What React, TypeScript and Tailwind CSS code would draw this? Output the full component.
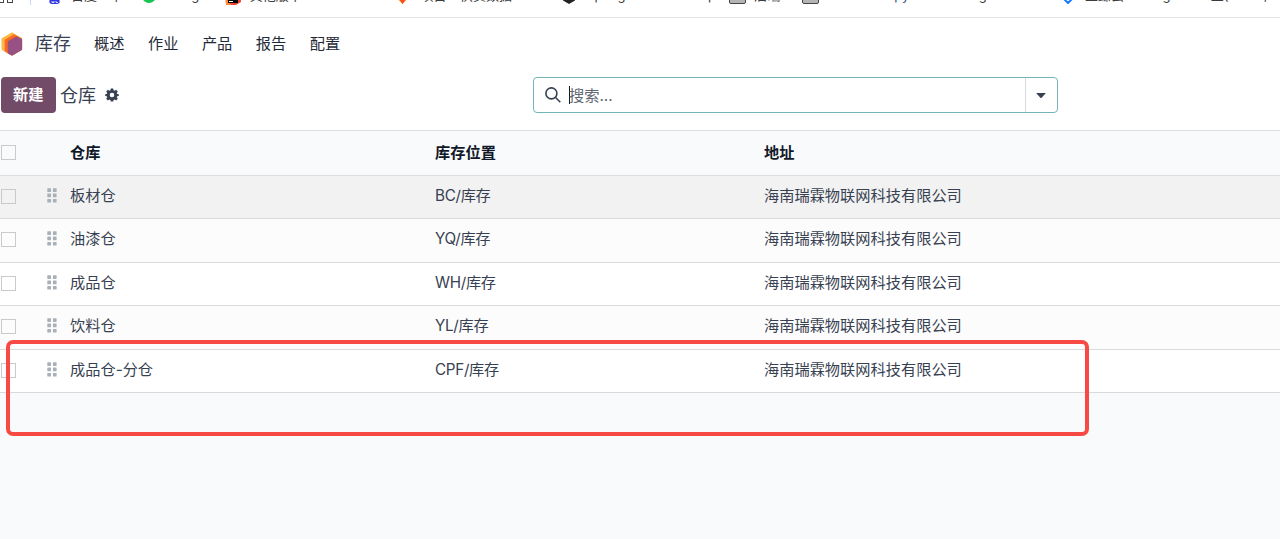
import React from "react";

const menus = ["概述", "作业", "产品", "报告", "配置"];

const warehouses = [
  { name: "板材仓", location: "BC/库存", bg: "bg-[#f2f2f2]" },
  { name: "油漆仓", location: "YQ/库存", bg: "bg-[#fcfcfc]" },
  { name: "成品仓", location: "WH/库存", bg: "bg-white" },
  { name: "饮料仓", location: "YL/库存", bg: "bg-[#fcfcfc]" },
  { name: "成品仓-分仓", location: "CPF/库存", bg: "bg-white" },
];

const company = "海南瑞霖物联网科技有限公司";

function Folder() {
  return (
    <span className="mt-[2px] h-[13px] w-[17px] shrink-0 rounded-[2px] border-[1.5px] border-[#454545] bg-[#b5b5b5]" />
  );
}

// Only the lower edge of the bookmarks is inside the window
function Bookmarks() {
  return (
    <div className="h-[18px] overflow-hidden border-b border-[#e4e5e6] bg-white text-[13px] text-[#3c3c3c]">
      <div className="-mt-[14px] flex h-5 items-center whitespace-nowrap">
        <div className="flex w-[48px] gap-[3px]">
          <span className="mt-[9px] h-[7px] w-[4px] border-[1.5px] border-l-0 border-[#474747]" />
          <span className="mt-[9px] h-[7px] w-[6px] border-[1.5px] border-[#474747]" />
          <span className="ml-[14px] h-[18px] w-px bg-[#c6dafb]" />
        </div>
        <div className="flex w-[94px] items-center gap-[10px]">
          <svg className="h-4 w-[13px]" viewBox="0 0 12 16">
            <path d="M1 11 4 8H8L11 11V15L9 16H3L1 15Z" fill="#3037df" />
            <path d="M3.5 13v1.5h2V13m2 0v1.5h2" fill="none" stroke="#fff" strokeWidth="0.8" />
          </svg>
          百度一下
        </div>
        <div className="flex w-[83px] items-center gap-[10px]">
          <svg className="h-[14px] w-[14px]" viewBox="0 0 12 12">
            <circle cx="6" cy="6" r="6" fill="#16c453" />
          </svg>
          Google
        </div>
        <div className="flex w-[171px] items-center gap-[9px]">
          <svg className="mt-[2px] h-4 w-4" viewBox="0 0 16 16">
            <path d="M1 2 15 0 16 13 11 16H1Z" fill="#f04432" />
            <path d="M0 8 6 16H1Z" fill="#ff8b32" />
            <path d="M3 2H13V14H3Z" fill="#050505" />
            <path d="M4 12h4v1H4z" fill="#fff" />
          </svg>
          其他版本 - IntelliJ
        </div>
        <div className="flex w-[167px] items-center gap-[12px]">
          <svg className="h-4 w-[13px]" viewBox="0 0 12 16">
            <path d="M0 10 6 16 12 10 10 4H2Z" fill="#fc9d26" />
            <path d="M2 10 6 16 10 10Z" fill="#f44c28" />
          </svg>
          项目 - 供货数据 - Gi
        </div>
        <div className="flex w-[167px] items-center gap-[10px] tracking-[-0.25px]">
          <svg className="mt-[1px] h-[14px] w-[14px]" viewBox="0 0 12 14">
            <path d="M6 0 12 3.5v7L6 14 0 10.5v-7Z" fill="#222" />
          </svg>
          Spring Framework Op
        </div>
        <div className="flex w-[73px] items-center gap-2">
          <Folder />
          后端
        </div>
        <div className="flex w-[259px] items-center gap-[10px]">
          <Folder />
          <span className="w-[55px]">Java SE</span>
          <span className="w-[32px] text-[#31516b]">py</span>
          <span className="tracking-[-0.5px]">Learning Docs</span>
        </div>
        <div className="flex w-[150px] items-center gap-[10px]">
          <svg className="h-4 w-[14px]" viewBox="0 0 12 16">
            <path d="m6 6 4.5 4.5L6 15l-4.5-4.5Z" fill="none" stroke="#1677ff" strokeWidth="2" />
          </svg>
          <span className="w-[52px]">至臻云</span>
          <span>Page</span>
        </div>
        <span>至( Docs, A</span>
      </div>
    </div>
  );
}

// Three overlapping hexagons: yellow, orange, purple
function Logo() {
  return (
    <svg className="h-6 w-[22px] shrink-0" viewBox="0 0 22 24" strokeWidth="1.4" strokeLinejoin="round">
      <path d="M11 1.1 20.4 6.5V17.5L11 22.8 1.2 17.3V6.8Z" fill="#fbb945" stroke="#fbb945" />
      <path d="M13 3 20.4 7.2V17.5L11 22.8 4.4 19.2V8.2Z" fill="#fc6a22" stroke="#fc6a22" />
      <path d="M15.6 5 20.4 7.6V17.5L11 22.8 7.4 20.8V9.9Z" fill="#985184" stroke="#985184" />
    </svg>
  );
}

function Gear() {
  return (
    <svg className="ml-[9px] h-[14px] w-[14px]" viewBox="0 0 14 14" fill="#374151">
      <path
        fillRule="evenodd"
        d="M5.8.5h2.4l.4 1.8 1 .4 1.5-1 1.7 1.7-1 1.5.4 1 1.6.3v1.7l-1.6.4-.4 1 1 1.5-1.7 1.7-1.5-1-1 .4-.4 1.7H5.8l-.4-1.7-1-.4-1.5 1-1.7-1.7 1-1.5-.4-1-1.6-.4V6.2l1.6-.3.4-1-1-1.5 1.7-1.7 1.5 1 1-.4ZM7 4.7a2.3 2.3 0 1 0 0 4.6 2.3 2.3 0 0 0 0-4.6Z"
      />
    </svg>
  );
}

function Checkbox() {
  return <span className="ml-px block h-[15px] w-[15px] border border-[#c9cacb]" />;
}

function Handle() {
  return (
    <svg className="mb-[2px] h-[15px] w-[10px]" viewBox="0 0 10 15" fill="#aab0b7">
      {[0.3, 5.6, 10.9].map((y) => (
        <React.Fragment key={y}>
          <rect x="0.3" y={y} width="3.7" height="3.7" rx="0.5" />
          <rect x="5.9" y={y} width="3.7" height="3.7" rx="0.5" />
        </React.Fragment>
      ))}
    </svg>
  );
}

export default function App() {
  return (
    <div className="relative h-[539px] w-[1280px] overflow-hidden bg-[#f9fafc] font-[Inter,'Noto_Sans_CJK_SC',sans-serif] text-[15.23px] text-[#374151]">
      <Bookmarks />
      <nav className="flex h-[51px] items-center bg-white pl-px text-[#1f2937]">
        <Logo />
        <span className="ml-3 w-[59px] text-[18px] text-[#374151]">库存</span>
        <div className="flex gap-[23.5px] pt-[2px]">
          {menus.map((menu) => (
            <span key={menu}>{menu}</span>
          ))}
        </div>
      </nav>
      <div className="flex h-[61px] items-start bg-white pt-2 pl-px">
        <button className="h-9 w-[54.5px] rounded-[4px] bg-[#714b67] pt-px font-bold text-white">新建</button>
        <div className="flex h-9 w-[477.5px] items-center pl-[4.5px]">
          <span className="text-[18px]">仓库</span>
          <Gear />
        </div>
        <div className="flex h-9 w-[525px] items-center rounded-[4px] border border-[#71b4b9] bg-white">
          <svg className="ml-[11px] h-4 w-4" viewBox="0 0 16 16" fill="none" stroke="#374151" strokeWidth="1.6">
            <circle cx="6.4" cy="6.4" r="5.5" />
            <path d="m10.3 10.3 5 5" />
          </svg>
          <span className="ml-2 h-[18px] w-px bg-[#111827]" />
          <span className="-ml-px flex-1 pt-[2px] text-[#5f6670]">搜索...</span>
          <span className="flex h-full w-8 items-center justify-center border-l border-[#d8dadd] pr-px">
            <svg className="h-[5px] w-[10px]" viewBox="0 0 10 5">
              <path d="M.8 0h8.4q.8 0 .3.6L5.6 4.7q-.6.6-1.2 0L.5.6Q0 0 .8 0Z" fill="#374151" />
            </svg>
          </span>
        </div>
      </div>
      <div className="border-t border-[#dcdee0]">
        <div className="grid h-[44.5px] grid-cols-[70px_365px_329px_1fr] items-center border-b border-[#dcdee0] font-bold text-[#111827]">
          <Checkbox />
          <span className="pt-[2px]">仓库</span>
          <span className="pt-[2px]">库存位置</span>
          <span className="pt-[2px]">地址</span>
        </div>
        {warehouses.map((row) => (
          <div
            key={row.name}
            className={`grid h-[43.5px] grid-cols-[47px_23px_365px_329px_1fr] items-center border-b border-[#d8dadd] pb-px ${row.bg}`}
          >
            <Checkbox />
            <Handle />
            <span>{row.name}</span>
            <span className="tracking-[-0.3px]">{row.location}</span>
            <span>{company}</span>
          </div>
        ))}
      </div>
      <div className="absolute top-[340px] left-[5.5px] h-[96px] w-[1083px] rounded-[7px] border-[4.5px] border-[#f84a45]" />
    </div>
  );
}
